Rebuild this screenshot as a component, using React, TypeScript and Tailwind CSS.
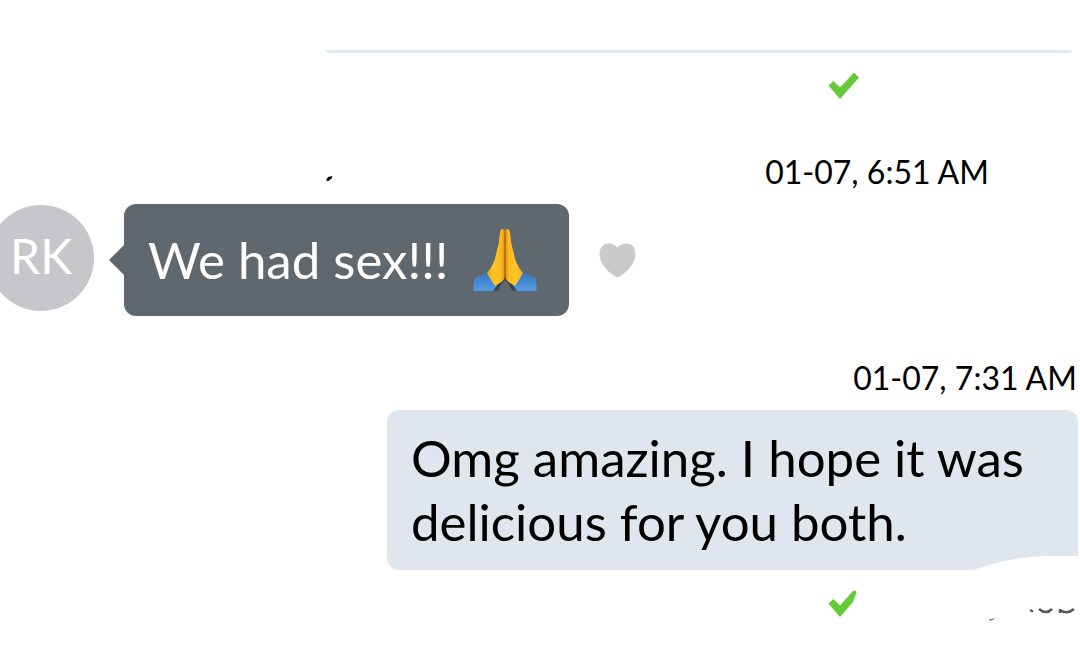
import React from 'react';

function CheckIcon({ clipped = false }: { clipped?: boolean }) {
  return (
    <svg width="32" height="28" viewBox="0 0 32 28" aria-label="Delivered" role="img">
      <path
        d={
          clipped
            ? 'M0.5 13.5L5.5 9L12 15.5L25 1Q28 -0.5 28.5 2.5L25 12L12 27Z'
            : 'M0.5 13.5L5.5 9L12 15.5L26 0.5L31 5.5L12 27Z'
        }
        fill="#62cb35"
      />
    </svg>
  );
}

function HeartIcon() {
  return (
    <svg width="37" height="35" viewBox="0 0 37 35" aria-hidden="true">
      <path
        d="M18.5 4.500C16 1.500 13 0.500 10 0.500C4 0.500 0.500 5 0.500 11C0.500 19.500 8 29 16.500 33.500Q18.500 34.500 20.500 33.500C29 29 36.500 19.500 36.500 11C36.500 5 33 0.500 27 0.500C24 0.500 21 1.500 18.500 4.500Z"
        fill="#cacaca"
      />
    </svg>
  );
}

function PrayIcon() {
  return (
    <svg width="64" height="64" viewBox="0 0 64 64" role="img" aria-label="Folded hands">
      <defs>
        <linearGradient id="palm" x1="0" x2="1">
          <stop offset="0" stopColor="#f0a71f" />
          <stop offset="0.4" stopColor="#ffc629" />
          <stop offset="0.8" stopColor="#fcb91f" />
          <stop offset="1" stopColor="#d98f12" />
        </linearGradient>
        <linearGradient id="cuff" x1="0" y1="0" x2="0" y2="1">
          <stop offset="0" stopColor="#3577bd" />
          <stop offset="1" stopColor="#559be4" />
        </linearGradient>
        <g id="half">
          <path d="M14 44.500L1.500 50Q0 56 0.500 63H21L26 56L18 45Z" fill="url(#cuff)" />
          <path d="M20 63L28 52L32 50V52Q27 57 25 62.500Z" fill="#344555" />
          <path
            d="M29.500 1Q27 1.500 26.800 6L25.700 16Q23.500 23 22 31Q18.500 40 14 45Q17 51 22 58L28.500 54Q32 51 32 46V4Q31.500 0.500 29.500 1Z"
            fill="url(#palm)"
          />
        </g>
      </defs>
      <use href="#half" />
      <use href="#half" transform="translate(64 0) scale(-1 1)" />
      <path d="M32 4V50" stroke="#a75d09" strokeWidth="1.200" />
    </svg>
  );
}

export default function App() {
  return (
    <main className="flex flex-col overflow-hidden bg-white pt-[50px] pb-6 font-['Lato','Open_Sans',sans-serif] text-black">
      <div className="mr-2 ml-[326px] h-[3px] rounded-b-full bg-[#dfe9f1]" />

      <div className="mt-[19px] flex justify-end pr-[220px]">
        <CheckIcon />
      </div>

      <div className="mt-[52px] flex items-center justify-between pr-[91px] pl-[326px]">
        <svg width="7" height="5" viewBox="0 0 7 5" className="mt-3" aria-hidden="true">
          <path d="M0 4.500L2 1L6.500 0L5.500 2.500L2.500 5Z" fill="#000" />
        </svg>
        <time className="text-[32px] leading-10">01-07, 6:51 AM</time>
      </div>

      <div className="mt-3 flex items-center">
        <div className="-mt-1 -ml-3 flex size-[106px] shrink-0 items-center justify-center rounded-full bg-[#c7c6cb] pb-1 text-5xl text-white">
          RK
        </div>
        <svg width="15" height="30" viewBox="0 0 15 30" className="ml-[15px] shrink-0" aria-hidden="true">
          <path d="M15 0L0 15L15 30Z" fill="#60686f" />
        </svg>
        <div className="flex h-28 items-center gap-6 rounded-xl bg-[#60686f] pr-8 pl-6 whitespace-nowrap">
          <p className="text-[51px] leading-[64px] text-white">We had sex!!!</p>
          <PrayIcon />
        </div>
        <button type="button" aria-label="Like" className="ml-[30px] shrink-0">
          <HeartIcon />
        </button>
      </div>

      <div className="mt-[42px] flex justify-end pr-[3px]">
        <time className="text-[32px] leading-10">01-07, 7:31 AM</time>
      </div>

      <div className="relative mt-3 mr-0.5 ml-[387px] rounded-xl bg-[#dfe6ed] px-6 py-4">
        <p className="text-[51px] leading-[64px]">
          Omg amazing. I hope it was
          <br />
          delicious for you both.
        </p>
        <svg width="104" height="14" viewBox="0 0 104 14" className="absolute right-0 bottom-0" aria-hidden="true">
          <path d="M0 14Q40 0 70 0H104V14Z" fill="#fff" />
        </svg>
      </div>

      <div className="mt-5 flex items-start justify-end pr-[5px]">
        <CheckIcon clipped />
        <svg width="90" height="14" viewBox="0 0 90 14" className="mt-[18px] ml-[125px]" aria-hidden="true">
          <g fill="none" stroke="#55575b" strokeWidth="2.500">
            <path d="M4 12Q8 12 9 10.500" strokeWidth="1" />
            <path d="M45 2L48 3.500" />
            <path d="M54 1Q61 7 67 1" />
            <path d="M75 1V5M75 2Q82 7 89 1" />
          </g>
        </svg>
      </div>
    </main>
  );
}
